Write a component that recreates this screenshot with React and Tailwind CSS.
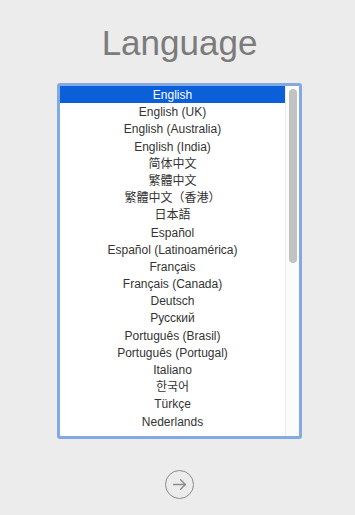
import React from 'react';

const languages = [
  'English',
  'English (UK)',
  'English (Australia)',
  'English (India)',
  '简体中文',
  '繁體中文',
  '繁體中文（香港）',
  '日本語',
  'Español',
  'Español (Latinoamérica)',
  'Français',
  'Français (Canada)',
  'Deutsch',
  'Русский',
  'Português (Brasil)',
  'Português (Portugal)',
  'Italiano',
  '한국어',
  'Türkçe',
  'Nederlands',
];

const App = () => {
  return (
    <div
      className="w-[355px] h-[515px] bg-[#ececec] flex flex-col items-center overflow-hidden pl-[4px]"
      style={{ fontFamily: '"Liberation Sans", "Noto Sans CJK SC", "Noto Sans CJK KR", sans-serif' }}
    >
      {/* Title */}
      <h1 className="mt-[21px] h-[44px] text-[35px] leading-[44px] text-[#7b7b7b]">
        Language
      </h1>

      {/* List box */}
      <div className="mt-[18px] w-[245px] h-[356px] rounded-[3px] border-[3px] border-[#82a9e1] bg-white flex">
        <ul className="flex-1">
          {languages.map((lang, i) => (
            <li
              key={lang}
              className={`h-[17.2px] pt-[2px] leading-[15.2px] text-center text-[12px] ${
                i === 0 ? 'bg-[#0b5fd8] text-white' : 'text-[#333333]'
              }`}
            >
              {lang}
            </li>
          ))}
        </ul>
        {/* Scrollbar */}
        <div className="w-[14px] border-l border-[#ececec] bg-[#fbfbfb] flex justify-center pt-[3px]">
          <div className="w-[8px] h-[174px] rounded-full bg-[#c2c2c2]" />
        </div>
      </div>

      {/* Next button */}
      <button className="mt-[31px] w-[29px] h-[29px] rounded-full border-[1.5px] border-[#8a8a8a] flex items-center justify-center">
        <svg width="17" height="17" viewBox="0 0 16 16" fill="none" stroke="#8a8a8a" strokeWidth="1.3" strokeLinecap="round" strokeLinejoin="round">
          <path d="M2.5 8h11" />
          <path d="M9 3.5L13.5 8 9 12.5" />
        </svg>
      </button>
    </div>
  );
};

export default App;
